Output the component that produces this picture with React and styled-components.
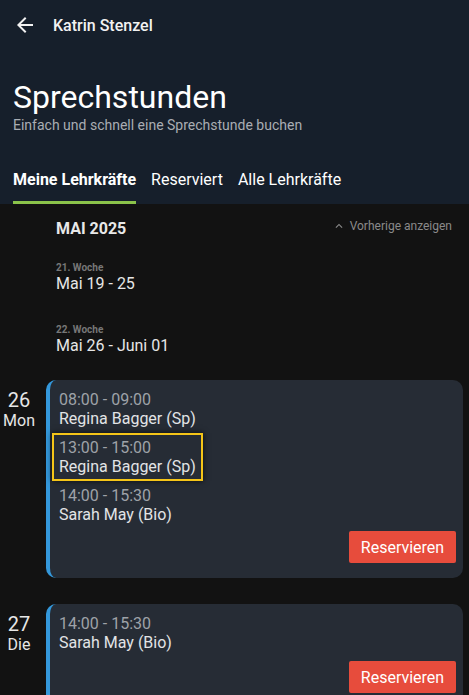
import React from 'react';
import styled, { createGlobalStyle } from 'styled-components';
import { MdArrowBack, MdKeyboardArrowUp } from 'react-icons/md';

const GlobalStyle = createGlobalStyle`
  html, body {
    margin: 0;
    padding: 0;
    background: #121212;
  }
  body {
    font-family: Roboto, "Noto Sans", "Liberation Sans", sans-serif;
    color: #fff;
    overflow: hidden;
  }
`;

const Page = styled.div`
  width: 469px;
  height: 695px;
  overflow: hidden;
  background: #121212;
`;

const Header = styled.header`
  background: #161f2b;
  padding: 0 13px;
`;

const TopBar = styled.div`
  height: 50px;
  display: flex;
  align-items: center;
  gap: 16px;
  font-size: 16px;
  font-weight: 500;
  color: #f2f2f2;
`;

const Title = styled.h1`
  margin: 29px 0 0;
  font-size: 32px;
  line-height: 36px;
  font-weight: 400;
`;

const Subtitle = styled.p`
  margin: 1px 0 0;
  font-size: 14px;
  line-height: 18px;
  color: #a9adb3;
`;

const Tabs = styled.nav`
  display: flex;
  gap: 15px;
  margin-top: 36px;
`;

const Tab = styled.div`
  font-size: 16px;
  line-height: 20px;
  padding-bottom: 11px;
  font-weight: ${(p) => (p.$active ? 700 : 400)};
  border-bottom: 3px solid ${(p) => (p.$active ? '#8bc34a' : 'transparent')};
`;

const Content = styled.main`
  padding: 15px 6px 0 0;
`;

const MonthRow = styled.div`
  display: flex;
  justify-content: space-between;
  align-items: center;
  padding-left: 56px;
  padding-right: 11px;
`;

const Month = styled.div`
  font-size: 16px;
  font-weight: 700;
  line-height: 20px;
  color: #e8e8e8;
`;

const PrevLink = styled.div`
  display: flex;
  align-items: center;
  gap: 4px;
  font-size: 12px;
  color: #8a8a8a;
  margin-top: -6px;
`;

const Week = styled.div`
  padding-left: 56px;
  margin-top: ${(p) => p.$top}px;
`;

const WeekNo = styled.div`
  font-size: 10px;
  font-weight: 700;
  line-height: 12px;
  color: #777;
`;

const WeekRange = styled.div`
  font-size: 16px;
  line-height: 20px;
  color: #e6e6e6;
`;

const Day = styled.section`
  display: flex;
  align-items: flex-start;
  margin-top: ${(p) => p.$top}px;
`;

const DayLabel = styled.div`
  width: 38px;
  flex: none;
  text-align: center;
  padding-top: 9px;
  color: #e6e6e6;
`;

const DayNum = styled.div`
  font-size: 20px;
  line-height: 22px;
`;

const DayName = styled.div`
  font-size: 16px;
  line-height: 19px;
`;

const Card = styled.div`
  margin-left: 8px;
  flex: 1;
  background: #262c35;
  border-left: 4px solid #3498db;
  border-radius: 10px;
  padding: 5px 7px 15px 2px;
  display: flex;
  flex-direction: column;
  align-items: flex-start;
`;

const Slot = styled.div`
  padding: 3px 5px;
  border: 2px solid ${(p) => (p.$selected ? '#f5c518' : 'transparent')};
  box-shadow: ${(p) => (p.$selected ? '0 0 6px rgba(0,0,0,0.7)' : 'none')};
`;

const Time = styled.div`
  font-size: 16px;
  line-height: 19px;
  color: #9ea2a8;
`;

const Teacher = styled.div`
  font-size: 16px;
  line-height: 19px;
  color: #e2e4e6;
`;

const ReserveButton = styled.button`
  align-self: flex-end;
  margin-top: ${(p) => p.$top}px;
  height: 32px;
  width: 107px;
  border: none;
  border-radius: 2px;
  background: #e74c3c;
  color: #fff;
  font-family: inherit;
  font-size: 16px;
  cursor: pointer;
`;

const days = [
  {
    num: '26',
    name: 'Mon',
    top: 24,
    btnTop: 2,
    slots: [
      { time: '08:00 - 09:00', teacher: 'Regina Bagger (Sp)' },
      { time: '13:00 - 15:00', teacher: 'Regina Bagger (Sp)', selected: true },
      { time: '14:00 - 15:30', teacher: 'Sarah May (Bio)' },
    ],
  },
  {
    num: '27',
    name: 'Die',
    top: 26,
    btnTop: 4,
    slots: [{ time: '14:00 - 15:30', teacher: 'Sarah May (Bio)' }],
  },
];

const App = () => {
  return (
    <Page>
      <GlobalStyle />
      <Header>
        <TopBar>
          <MdArrowBack size={24} />
          Katrin Stenzel
        </TopBar>
        <Title>Sprechstunden</Title>
        <Subtitle>Einfach und schnell eine Sprechstunde buchen</Subtitle>
        <Tabs>
          <Tab $active>Meine Lehrkräfte</Tab>
          <Tab>Reserviert</Tab>
          <Tab>Alle Lehrkräfte</Tab>
        </Tabs>
      </Header>

      <Content>
        <MonthRow>
          <Month>MAI 2025</Month>
          <PrevLink>
            <MdKeyboardArrowUp size={14} />
            Vorherige anzeigen
          </PrevLink>
        </MonthRow>

        <Week $top={23}>
          <WeekNo>21. Woche</WeekNo>
          <WeekRange>Mai 19 - 25</WeekRange>
        </Week>
        <Week $top={30}>
          <WeekNo>22. Woche</WeekNo>
          <WeekRange>Mai 26 - Juni 01</WeekRange>
        </Week>

        {days.map((d) => (
          <Day key={d.num} $top={d.top}>
            <DayLabel>
              <DayNum>{d.num}</DayNum>
              <DayName>{d.name}</DayName>
            </DayLabel>
            <Card>
              {d.slots.map((s, i) => (
                <Slot key={i} $selected={s.selected}>
                  <Time>{s.time}</Time>
                  <Teacher>{s.teacher}</Teacher>
                </Slot>
              ))}
              <ReserveButton $top={d.btnTop}>Reservieren</ReserveButton>
            </Card>
          </Day>
        ))}
      </Content>
    </Page>
  );
};

export default App;
